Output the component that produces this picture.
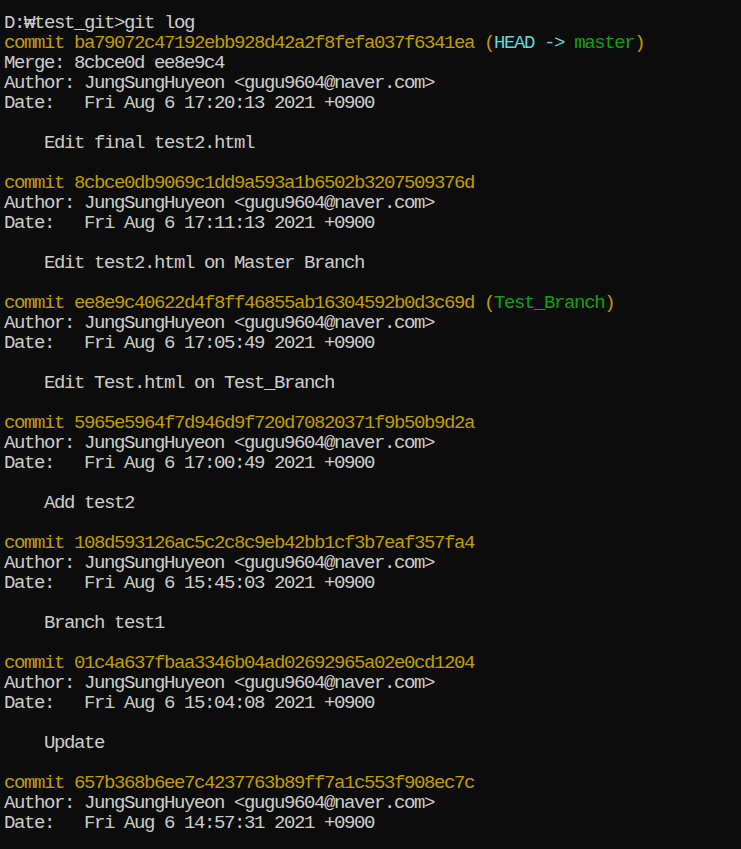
import React from "react";

type Seg = { t: string; c?: string };
const Y = "text-[#c19c00]";
const C = "text-[#61d6d6]";
const G = "text-[#13a10e]";

const commits = [
  {
    hash: "ba79072c47192ebb928d42a2f8fefa037f6341ea",
    refs: "head",
    merge: "Merge: 8cbce0d ee8e9c4",
    date: "Fri Aug 6 17:20:13 2021 +0900",
    msg: "Edit final test2.html",
  },
  { hash: "8cbce0db9069c1dd9a593a1b6502b3207509376d", date: "Fri Aug 6 17:11:13 2021 +0900", msg: "Edit test2.html on Master Branch" },
  { hash: "ee8e9c40622d4f8ff46855ab16304592b0d3c69d", refs: "test", date: "Fri Aug 6 17:05:49 2021 +0900", msg: "Edit Test.html on Test_Branch" },
  { hash: "5965e5964f7d946d9f720d70820371f9b50b9d2a", date: "Fri Aug 6 17:00:49 2021 +0900", msg: "Add test2" },
  { hash: "108d593126ac5c2c8c9eb42bb1cf3b7eaf357fa4", date: "Fri Aug 6 15:45:03 2021 +0900", msg: "Branch test1" },
  { hash: "01c4a637fbaa3346b04ad02692965a02e0cd1204", date: "Fri Aug 6 15:04:08 2021 +0900", msg: "Update" },
  { hash: "657b368b6ee7c4237763b89ff7a1c553f908ec7c", date: "Fri Aug 6 14:57:31 2021 +0900" },
];

function buildLines(): Seg[][] {
  const lines: Seg[][] = [[{ t: "D:\u20A9test_git>git log" }]];
  commits.forEach((cm) => {
    const first: Seg[] = [{ t: "commit " + cm.hash, c: Y }];
    if (cm.refs === "head") {
      first.push({ t: " (", c: Y }, { t: "HEAD -> ", c: C }, { t: "master", c: G }, { t: ")", c: Y });
    } else if (cm.refs === "test") {
      first.push({ t: " (", c: Y }, { t: "Test_Branch", c: G }, { t: ")", c: Y });
    }
    lines.push(first);
    if (cm.merge) lines.push([{ t: cm.merge }]);
    lines.push([{ t: "Author: JungSungHuyeon <gugu9604@naver.com>" }]);
    lines.push([{ t: "Date:   " + cm.date }]);
    if (cm.msg) {
      lines.push([{ t: " " }]);
      lines.push([{ t: "    " + cm.msg }]);
      lines.push([{ t: " " }]);
    }
  });
  return lines;
}

export default function App() {
  const lines = buildLines();
  return (
    <div
      className="w-[741px] h-[849px] overflow-hidden bg-[#0c0c0c] text-[#cccccc] pt-[13px] pl-[4px] text-[19px] tracking-[-1.4px]"
      style={{ fontFamily: '"Liberation Mono", "DejaVu Sans Mono", "Noto Sans CJK KR", monospace' }}
    >
      {lines.map((segs, i) => (
        <div key={i} className="h-[20px] leading-[20px] whitespace-pre">
          {segs.map((s, j) => (
            <span key={j} className={s.c}>
              {s.t}
            </span>
          ))}
        </div>
      ))}
    </div>
  );
}
